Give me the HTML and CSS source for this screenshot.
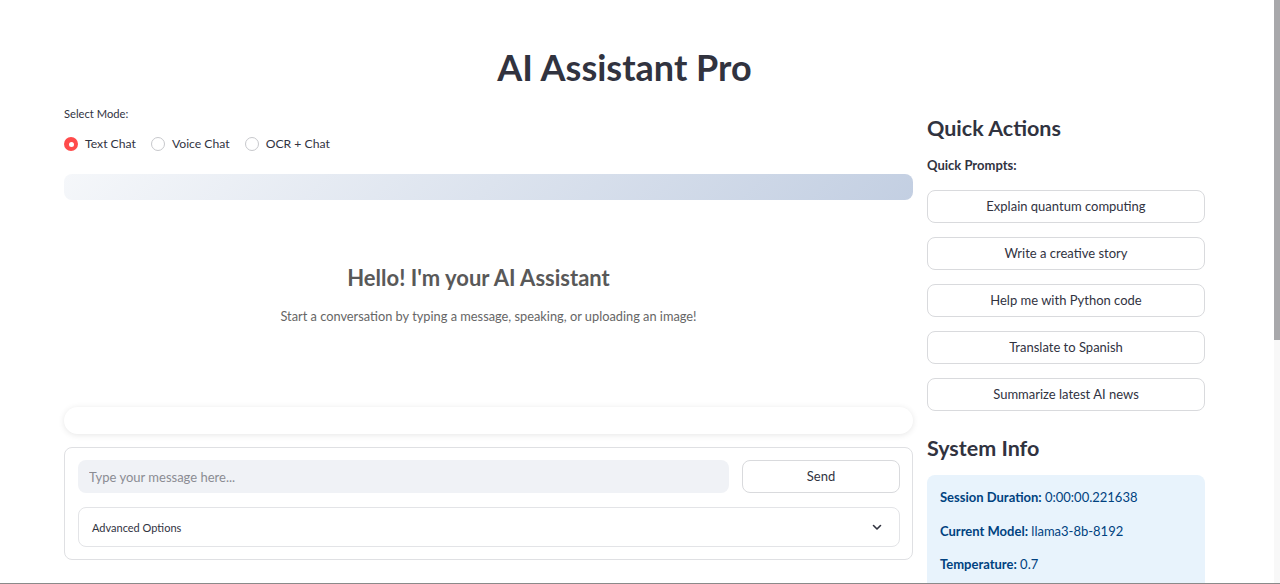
FILE: index.html
```html
<!DOCTYPE html>
<html lang="en">
<head>
<meta charset="utf-8">
<title>AI Assistant Pro</title>
<link rel="stylesheet" href="styles.css">
</head>
<body>
<div class="app">
  <main class="main">
    <h1 class="title">AI Assistant Pro</h1>
    <div class="columns">
      <section class="left">
        <div class="mode-label">Select Mode:</div>
        <div class="radios">
          <label class="radio checked"><span class="dot"></span>Text Chat</label>
          <label class="radio"><span class="dot"></span>Voice Chat</label>
          <label class="radio"><span class="dot"></span>OCR + Chat</label>
        </div>
        <div class="gradient-bar"></div>
        <div class="welcome">
          <h2 class="welcome-title">Hello! I'm your AI Assistant</h2>
          <p class="welcome-text">Start a conversation by typing a message, speaking, or uploading an image!</p>
        </div>
        <div class="pill-bar"></div>
        <form class="chat-form">
          <div class="input-row">
            <input class="text-input" type="text" placeholder="Type your message here...">
            <button class="btn send" type="button">Send</button>
          </div>
          <div class="expander">
            <span>Advanced Options</span>
            <svg class="chevron" width="12" height="12" viewBox="0 0 12 12"><path d="M2.5 4.5 L6 8 L9.5 4.5" fill="none" stroke="#31333f" stroke-width="1.6" stroke-linecap="round" stroke-linejoin="round"/></svg>
          </div>
        </form>
      </section>
      <aside class="right">
        <h3 class="side-title">Quick Actions</h3>
        <div class="sub-label">Quick Prompts:</div>
        <div class="prompts">
          <button class="btn prompt" type="button">Explain quantum computing</button>
          <button class="btn prompt" type="button">Write a creative story</button>
          <button class="btn prompt" type="button">Help me with Python code</button>
          <button class="btn prompt" type="button">Translate to Spanish</button>
          <button class="btn prompt" type="button">Summarize latest AI news</button>
        </div>
        <h3 class="side-title system">System Info</h3>
        <div class="info">
          <p><b>Session Duration:</b> 0:00:00.221638</p>
          <p><b>Current Model:</b> llama3-8b-8192</p>
          <p><b>Temperature:</b> 0.7</p>
        </div>
      </aside>
    </div>
  </main>
</div>
<div class="scroll-track"><div class="scroll-thumb"></div></div>
<div class="screen-edge"></div>
</body>
</html>
```

FILE: styles.css
```css
html, body {
  margin: 0;
  padding: 0;
  background: #ffffff;
}

body {
  font-family: "Lato", "Noto Sans", sans-serif;
  color: #31333f;
  overflow: hidden;
}

.main {
  padding: 44px 0 40px 64px;
  width: 1141px;
}

.title {
  margin: 0;
  font-size: 36px;
  line-height: 46px;
  font-weight: 700;
  text-align: center;
  padding-right: 20px;
  color: #31333f;
}

.columns {
  display: grid;
  grid-template-columns: 849px 278px;
  column-gap: 14px;
  margin-top: 14px;
}

/* left column */
.mode-label {
  font-size: 11.2px;
  line-height: 20px;
}

.radios {
  display: flex;
  gap: 15px;
  margin-top: 10px;
  height: 20px;
  align-items: center;
}

.radio {
  display: flex;
  align-items: center;
  gap: 7px;
  font-size: 12.2px;
  line-height: 20px;
}

.dot {
  width: 14px;
  height: 14px;
  box-sizing: border-box;
  border-radius: 50%;
  border: 1px solid #c7c8cc;
  background: #fff;
  position: relative;
}

.radio.checked .dot {
  border: none;
  background: #ff4b4b;
}

.radio.checked .dot::after {
  content: "";
  position: absolute;
  left: 4.5px;
  top: 4.5px;
  width: 5px;
  height: 5px;
  border-radius: 50%;
  background: #fff;
}

.gradient-bar {
  margin-top: 20px;
  height: 26px;
  border-radius: 8px;
  background: linear-gradient(135deg, #f5f7fa 0%, #c3cfe2 100%);
}

.welcome {
  height: 207px;
  box-sizing: border-box;
  padding-top: 63px;
  text-align: center;
}

.welcome-title {
  margin: 0;
  font-size: 22px;
  line-height: 30px;
  font-weight: 700;
  color: #595959;
  padding-right: 20px;
}

.welcome-text {
  margin: 13px 0 0;
  font-size: 12.8px;
  line-height: 20px;
  color: #666666;
}

.pill-bar {
  height: 27px;
  border-radius: 14px;
  background: #ffffff;
  box-shadow: 0 1px 6px rgba(0, 0, 0, 0.10);
}

.chat-form {
  margin: 13px 0 0;
  border: 1px solid #dfe0e3;
  border-radius: 8px;
  padding: 12px 12px 12px 13px;
}

.input-row {
  display: grid;
  grid-template-columns: 1fr 158px;
  column-gap: 13px;
}

.text-input {
  height: 33px;
  box-sizing: border-box;
  border: none;
  outline: none;
  border-radius: 8px;
  background: #f0f2f6;
  padding: 0 11px;
  font-family: inherit;
  font-size: 13px;
  color: #31333f;
}

.text-input::placeholder {
  color: #8b8c93;
}

.btn {
  height: 33px;
  box-sizing: border-box;
  border: 1px solid #d9dadd;
  border-radius: 8px;
  background: #ffffff;
  font-family: inherit;
  font-size: 13px;
  line-height: 31px;
  color: #31333f;
  padding: 0 0 2px;
}

.expander {
  margin-top: 14px;
  height: 40px;
  box-sizing: border-box;
  border: 1px solid #e3e4e7;
  border-radius: 8px;
  display: flex;
  align-items: center;
  justify-content: space-between;
  padding: 0 16px 0 13px;
  font-size: 11px;
}

.chevron {
  display: block;
}

/* right column */
.side-title {
  margin: 10px 0 0;
  font-size: 21.5px;
  line-height: 28px;
  font-weight: 700;
}

.side-title.system {
  margin-top: 23px;
}

.sub-label {
  margin-top: 13px;
  font-size: 13px;
  line-height: 20px;
  font-weight: 700;
}

.prompts {
  margin-top: 15px;
  display: flex;
  flex-direction: column;
  gap: 14px;
}

.prompt {
  width: 100%;
}

.info {
  margin-top: 13px;
  height: 160px;
  background: #e8f3fc;
  border-radius: 8px;
  padding: 12px 13px 0;
  color: #004280;
  font-size: 13px;
  line-height: 20px;
}

.info p {
  margin: 0 0 13.5px;
}

.scroll-track {
  position: fixed;
  top: 0;
  right: 0;
  width: 6px;
  height: 100%;
  background: #f8f8f8;
}

.scroll-thumb {
  width: 6px;
  height: 340px;
  background: #a8a8ab;
}

.screen-edge {
  position: fixed;
  left: 0;
  right: 0;
  bottom: 0;
  height: 1px;
  background: #8a8a8a;
}
```
